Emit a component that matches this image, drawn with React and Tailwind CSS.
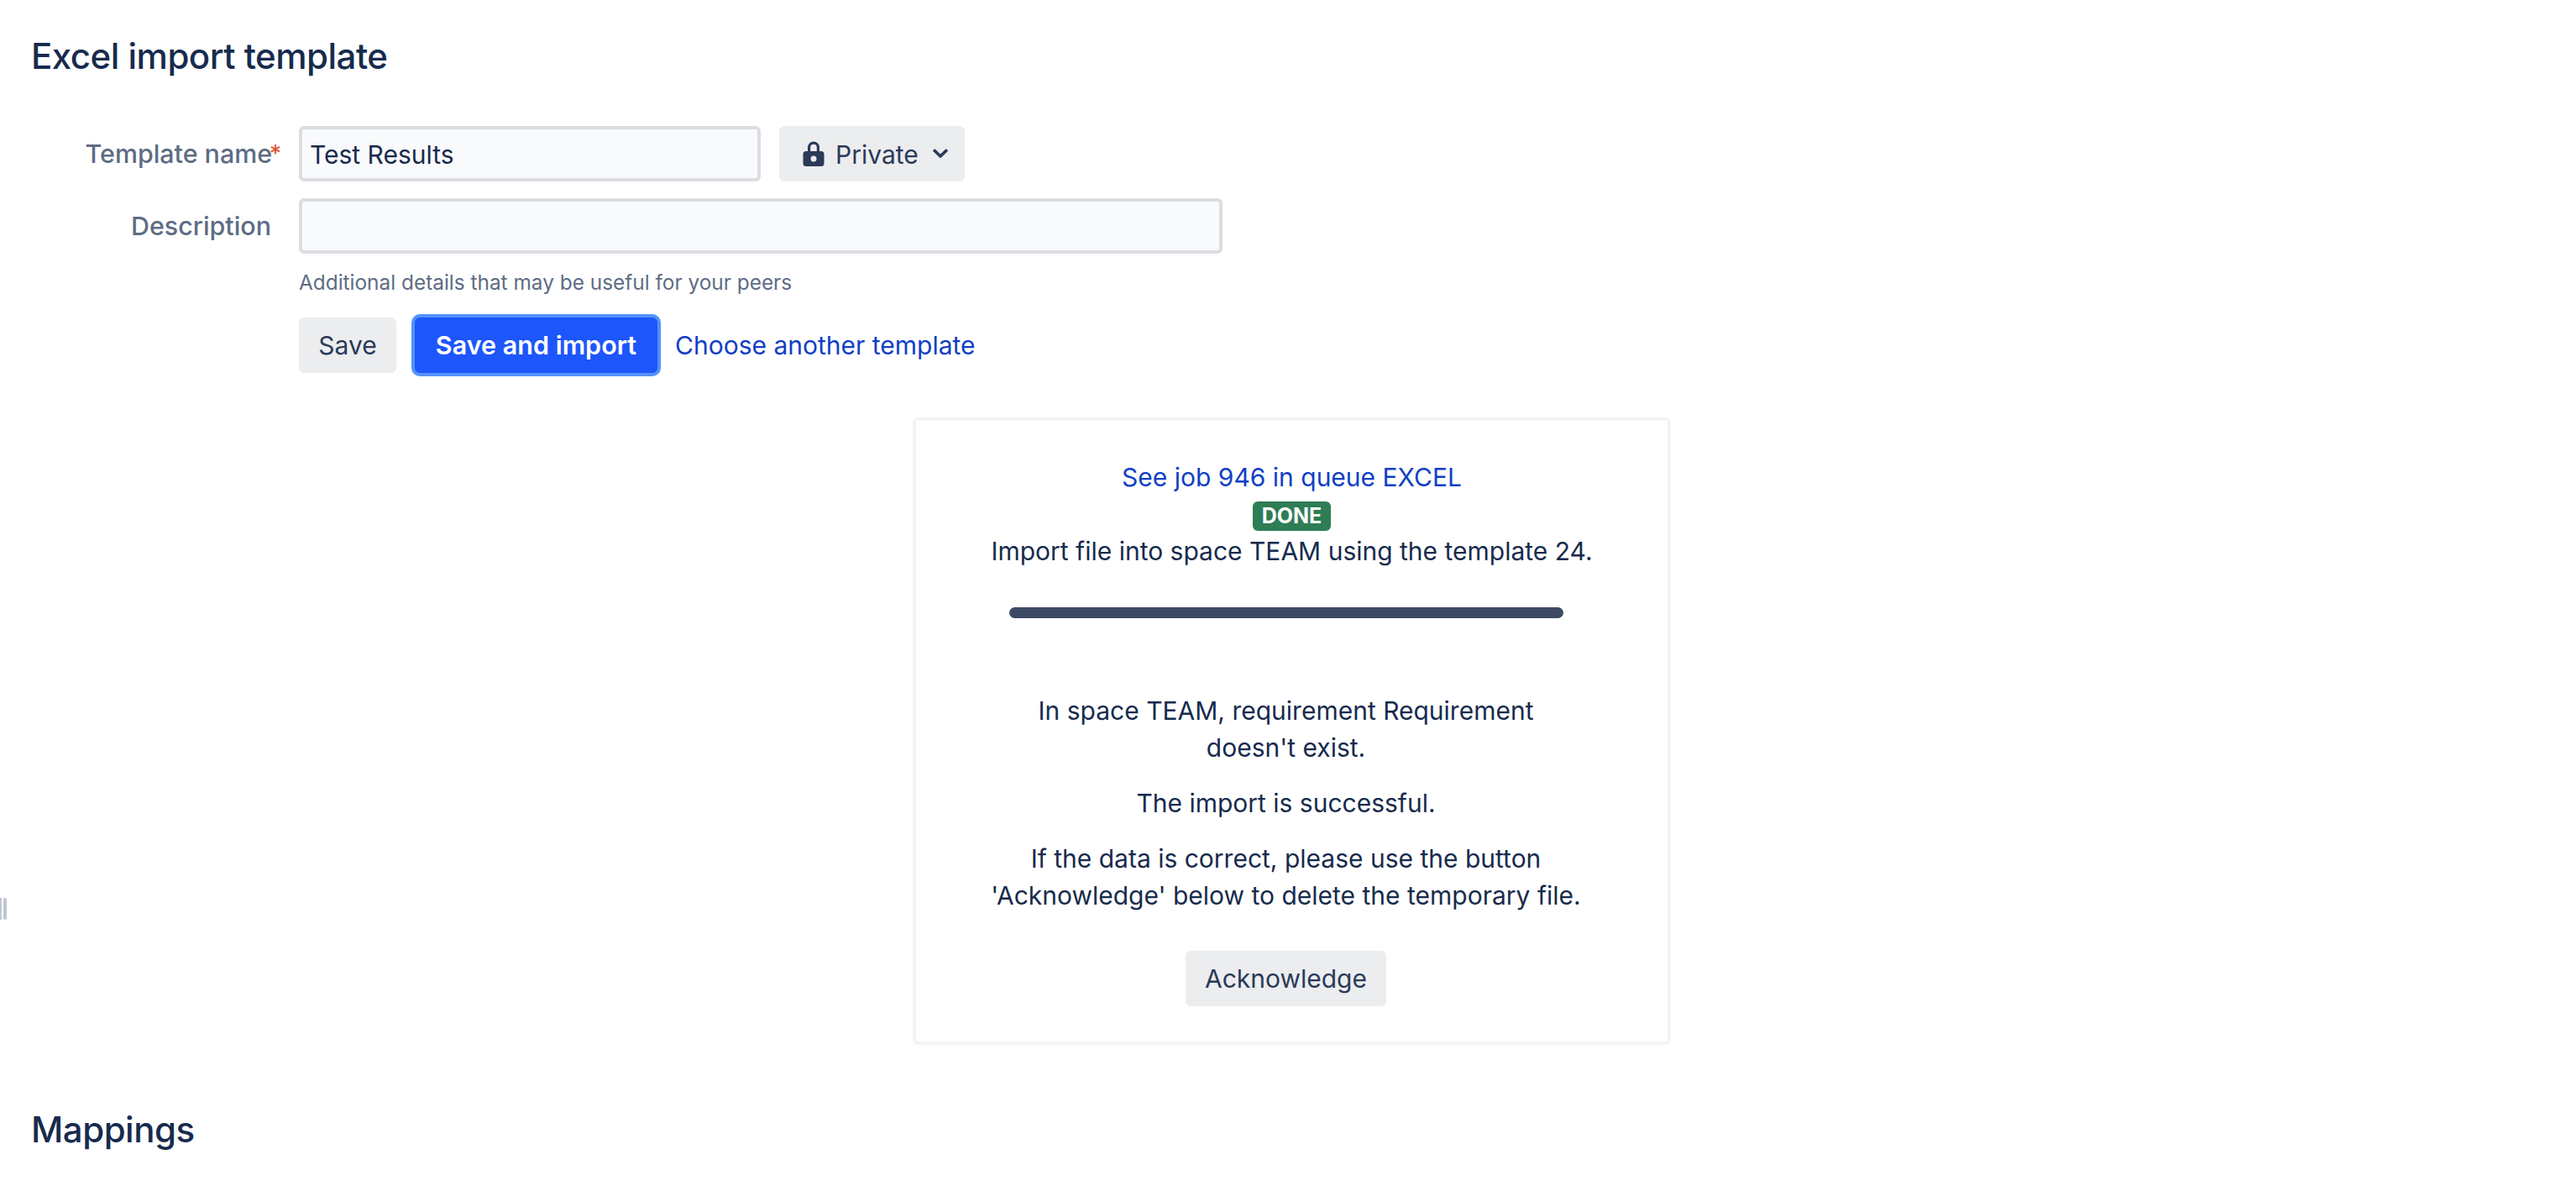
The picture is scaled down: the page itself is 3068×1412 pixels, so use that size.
const font = { fontFamily: "Inter, 'Liberation Sans', sans-serif" };

function LockIcon() {
  return (
    <svg width="26" height="30" viewBox="0 0 26 30" className="shrink-0">
      <path
        fillRule="evenodd"
        fill="#2c3a58"
        d="M6 12V7.500a7 7 0 0 1 14 0V12h2a3.500 3.500 0 0 1 3.500 3.500V26.500A3.500 3.500 0 0 1 22 30H4a3.500 3.500 0 0 1-3.500-3.500V15.500A3.500 3.500 0 0 1 4 12h2zm3.200 0h7.600V7.500a3.800 3.800 0 0 0-7.600 0V12zM13 17.500a3.500 3.500 0 1 0 0 7 3.500 3.500 0 0 0 0-7z"
      />
    </svg>
  );
}

function ChevronIcon() {
  return (
    <svg width="18" height="12" viewBox="0 0 18 12" className="shrink-0">
      <path d="M2.200 2.500 9 9l6.800-6.500" fill="none" stroke="#2c3a58" strokeWidth="3.800" strokeLinecap="round" strokeLinejoin="round" />
    </svg>
  );
}

export default function App() {
  return (
    <div className="relative min-h-[1412px] bg-white text-[30px] leading-[44px] text-[#172b4d] overflow-hidden pl-[37px] pt-[43px]" style={font}>
      <h1 className="text-[42px] leading-[48px] font-medium tracking-[-0.5px] text-[#172b4d]">Excel import template</h1>

      <div className="mt-[59px] flex items-center">
        <label className="relative w-[319px] pr-[32px] text-right text-[30.400px] font-medium text-[#5e6c84] whitespace-nowrap">
          Template name
          <span className="absolute right-[21px] top-0 text-[28px] font-normal text-[#de4f2b]">*</span>
        </label>
        <input
          readOnly
          value="Test Results"
          className="h-[66px] w-[550px] rounded-[6px] border-4 border-[#dcdde3] bg-[#f9fafb] px-[9px] pt-[2px] text-[#172b4d] outline-none"
        />
        <button className="ml-[22px] flex h-[66px] w-[221px] items-center rounded-[6px] bg-[#ecedef] pl-[28px] text-[#2b3a59]">
          <LockIcon />
          <span className="ml-[13px] pt-[2px]">Private</span>
          <span className="ml-[17px]"><ChevronIcon /></span>
        </button>
      </div>

      <div className="mt-[20px] flex items-center">
        <label className="w-[319px] pr-[33px] text-right text-[30.400px] font-medium text-[#5e6c84]">Description</label>
        <input readOnly className="h-[66px] w-[1100px] rounded-[6px] border-4 border-[#dcdde3] bg-[#f9fafb] outline-none" />
      </div>

      <p className="ml-[319px] mt-[17px] text-[24.4px] leading-[34px] text-[#5e6c84]">Additional details that may be useful for your peers</p>

      <div className="ml-[319px] mt-[25px] flex items-center">
        <button className="h-[66px] w-[116px] rounded-[6px] bg-[#ecedef] text-[#2b3a59]">Save</button>
        <button className="ml-[22px] h-[66px] w-[289px] rounded-[6px] bg-[#1d56fb] text-[30.500px] font-semibold text-white ring-4 ring-[#5491fb]">Save and import</button>
        <a className="ml-[21px] text-[#1040c4]">Choose another template</a>
      </div>

      <div className="mt-[53px] ml-[1050px] h-[747px] w-[903px] rounded-[6px] border-4 border-[#f3f4f8] bg-white flex flex-col items-center pt-[45px]">
        <a className="text-[#1040c4]">See job 946 in queue EXCEL</a>
        <span className="mt-[7px] flex h-[35px] w-[93px] items-center justify-center rounded-[6px] bg-[#2e7d55] text-[25px] font-bold leading-none text-white">DONE</span>
        <p className="mt-[2px]">Import file into space TEAM using the template 24.</p>

        <div className="mr-[14px] flex w-[720px] flex-col items-center">
          <div className="mt-[45px] h-[13px] w-[660px] rounded-full bg-[#3e4a63]" />
          <div className="mt-[88px] w-[640px] text-center">In space TEAM, requirement Requirement doesn't exist.</div>
          <p className="mt-[22px] text-center">The import is successful.</p>
          <p className="mt-[22px] text-center">If the data is correct, please use the button<br />'Acknowledge' below to delete the temporary file.</p>
          <button className="mt-[44px] h-[66px] w-[239px] rounded-[6px] bg-[#ecedef] text-[#2b3a59]">Acknowledge</button>
        </div>
      </div>

      <h2 className="mt-[77px] text-[42px] leading-[48px] font-medium tracking-[-0.5px] text-[#172b4d]">Mappings</h2>

      <div className="absolute left-0 top-[1069px] flex gap-[2px]">
        <div className="h-[26px] w-[2px] bg-[#c1c7d0]" />
        <div className="h-[26px] w-[4px] rounded-full bg-[#c1c7d0]" />
      </div>
    </div>
  );
}
